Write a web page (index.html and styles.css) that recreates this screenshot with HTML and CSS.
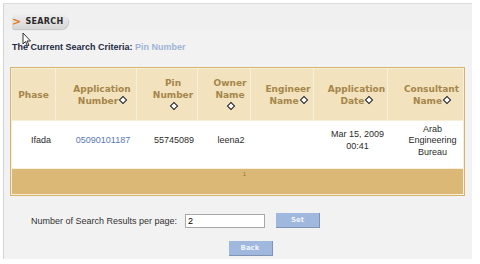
FILE: index.html
```html
<!DOCTYPE html>
<html lang="en">
<head>
    <meta charset="UTF-8">
    <title>Search Results</title>
    <link rel="stylesheet" href="styles.css">
</head>
<body>
    <div class="page">
        <div class="tab"><span class="chev">&gt;</span>SEARCH</div>
        <div class="criteria">The Current Search Criteria: <span class="value">Pin Number</span></div>

        <table class="results">
            <thead>
                <tr>
                    <th class="c1">Phase</th>
                    <th class="c2">Application Number<i class="sort"></i></th>
                    <th class="c3">Pin Number<br><i class="sort"></i></th>
                    <th class="c4">Owner Name<br><i class="sort"></i></th>
                    <th class="c5">Engineer Name<i class="sort"></i></th>
                    <th class="c6">Application Date<i class="sort"></i></th>
                    <th class="c7">Consultant Name<i class="sort"></i></th>
                </tr>
            </thead>
            <tbody>
                <tr class="row">
                    <td>Ifada</td>
                    <td><a href="#">05090101187</a></td>
                    <td>55745089</td>
                    <td>leena2</td>
                    <td></td>
                    <td>Mar 15, 2009<br>00:41</td>
                    <td class="tight">Arab Engineering Bureau</td>
                </tr>
                <tr class="pager">
                    <td colspan="7">1</td>
                </tr>
            </tbody>
        </table>

        <div class="perpage">
            <label>Number of Search Results per page:</label>
            <input type="text" value="2">
            <button class="btn">Set</button>
        </div>
        <div class="actions">
            <button class="btn">Back</button>
        </div>

        <svg class="cursor" width="10" height="15" viewBox="0 0 10 15">
            <path d="M1 1 L1 12 L3.5 9.5 L5.5 14 L7 13.3 L5 9 L8.5 9 Z" fill="#fff" stroke="#333" stroke-width="1"/>
        </svg>
    </div>
</body>
</html>
```

FILE: styles.css
```css
body{
    margin: 0;
    background-color: #fff;
    font-family: "Liberation Sans", Arial, sans-serif;
}
.page{
    position: relative;
    margin: 3px 0 0 3px;
    width: 469px;
    height: 256px;
    border-left: 1px solid #d4d4d4;
    border-top: 1px solid #dcdcdc;
    background: linear-gradient(#f0f0f0, #f0f0f0 26px, #f2f2f2 27px);
    padding: 7px 0 0 6px;
    box-sizing: border-box;
}
.tab{
    display: inline-flex;
    align-items: center;
    height: 15px;
    width: 53px;
    padding-left: 3px;
    margin-left: 2px;
    border-radius: 0 8px 8px 0;
    background: linear-gradient(#eeeeee, #d6d6d6);
    box-shadow: 1px 1px 1px #c4c4c4;
    font-family: "DejaVu Sans", Verdana, sans-serif;
    font-weight: bold;
    font-size: 8px;
    color: #2a2a2a;
    letter-spacing: 0.3px;
}
.tab .chev{
    color: #e87722;
    font-size: 11px;
    font-weight: bold;
    margin: 0 4px 0 -3px;
}
.criteria{
    margin: 13px 0 0 2px;
    font-size: 9px;
    font-weight: bold;
    color: #1e2a44;
}
.criteria .value{
    color: #9fb4d6;
}

.results{
    margin: 15px 0 0 0;
    width: 455px;
    border: 1px solid #d5b36f;
    border-spacing: 0;
    padding: 1px;
    background-color: #f8efd9;
    table-layout: fixed;
}
.results th,
.results td{
    box-sizing: border-box;
}
.results th{
    height: 51px;
    padding: 0 0 0 12px;
    border-left: 1px solid #f8efda;
    background-color: #f2e2bd;
    color: #a5864b;
    font-family: "DejaVu Sans", Verdana, sans-serif;
    font-size: 9px;
    line-height: 12px;
    font-weight: bold;
    text-align: center;
    vertical-align: middle;
}
.results th.c1{
    border-left: none;
    padding: 0;
}
.results .c1{ width: 43px; }
.results .c2{ width: 81px; }
.results .c3{ width: 61px; }
.results .c4{ width: 53px; }
.results .c5{ width: 63px; }
.results .c6{ width: 74px; }
.sort{
    display: inline-block;
    width: 4px;
    height: 4px;
    margin-left: 2px;
    border: 1.5px solid #1a1a1a;
    background-color: #fff;
    transform: rotate(45deg);
    vertical-align: 1px;
}
.row td{
    height: 48px;
    padding: 5px 0 13px 15px;
    border-top: 1px solid #f8efda;
    background-color: #fff;
    color: #2b2b2b;
    font-size: 9px;
    line-height: 11.5px;
    text-align: center;
    vertical-align: middle;
}
.row td.tight{
    padding: 0 0 7px 15px;
}
.row a{
    color: #5b79b2;
    text-decoration: none;
}
.pager td{
    height: 26px;
    padding: 2px 0 0 14px;
    border-top: 1px solid #f8efda;
    background-color: #dbb875;
    color: #9a7a3c;
    font-size: 6px;
    text-align: center;
    vertical-align: top;
}

.perpage{
    display: flex;
    align-items: center;
    margin: 17px 0 0 21px;
    font-size: 9px;
    color: #333;
}
.perpage input{
    width: 80px;
    height: 14px;
    margin-left: 8px;
    padding: 0 2px;
    box-sizing: border-box;
    border: 1px solid #a8a8a8;
    font-family: "Liberation Sans", Arial, sans-serif;
    font-size: 9px;
}
.btn{
    width: 44px;
    height: 15px;
    padding: 0;
    border: none;
    border-right: 1px solid #7f93b3;
    border-bottom: 1px solid #7f93b3;
    background-color: #a0b8dd;
    color: #eef3fb;
    font-family: "DejaVu Sans", Verdana, sans-serif;
    font-size: 7px;
    font-weight: bold;
}
.perpage .btn{
    margin-left: 11px;
}
.actions{
    display: flex;
    justify-content: center;
    margin: 13px 0 0 19px;
}
.cursor{
    position: absolute;
    left: 18px;
    top: 28px;
}
```
